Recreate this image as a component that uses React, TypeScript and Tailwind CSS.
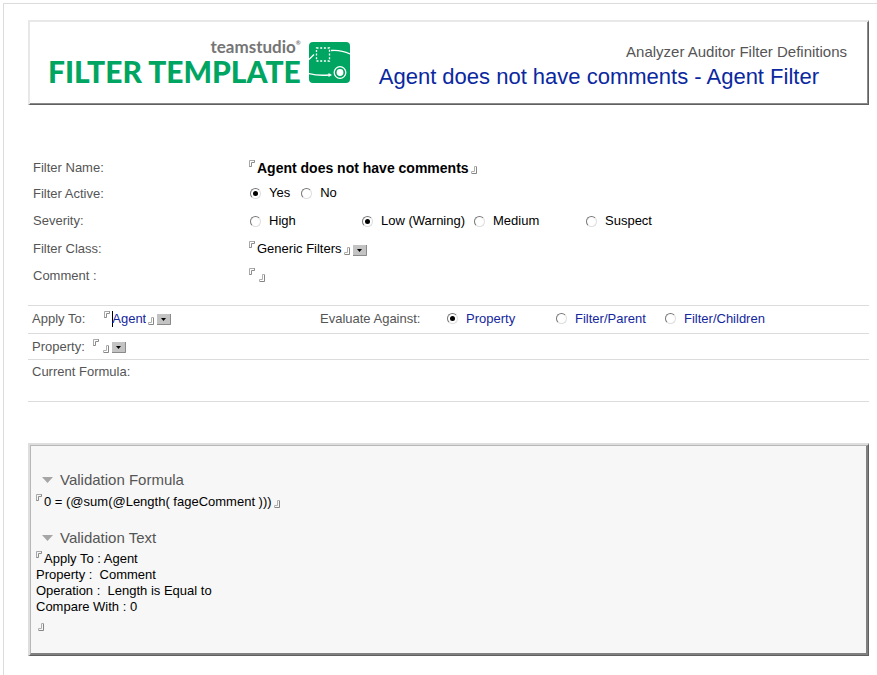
import React from "react";

const sans = "font-['Liberation_Sans',Arial,sans-serif]";

function OpenCorner({ className = "" }: { className?: string }) {
  return (
    <svg aria-hidden="true" className={`shrink-0 ${className}`} width="7" height="8" viewBox="0 0 7 8" fill="none">
      <path d="M.5 7V.5H6" stroke="#a8a8a8" />
      <path d="M.5 6.5H2.5V2.5H5.5V.5" stroke="#8c8c8c" />
    </svg>
  );
}

function CloseCorner({ className = "" }: { className?: string }) {
  return (
    <svg aria-hidden="true" className={`shrink-0 ${className}`} width="7" height="8" viewBox="0 0 7 8" fill="none">
      <path d="M5.5 .5V7.5H.5" stroke="#858585" />
      <path d="M.5 7V5.5H3.5V.5H5.5" stroke="#b0b0b0" />
    </svg>
  );
}

function DropArrow({ className = "" }: { className?: string }) {
  return (
    <svg aria-hidden="true" className={`shrink-0 ${className}`} width="14" height="11" viewBox="0 0 14 11">
      <path d="M0 0H14V11H0z" fill="#c3c3c3" />
      <path d="M13.5 0V10.5H0" stroke="#8a8a8a" fill="none" />
      <path d="M4 4H9L6.500 7z" fill="#000" />
    </svg>
  );
}

function Radio(props: { name: string; label: string; checked?: boolean; blue?: boolean }) {
  return (
    <label className={`flex items-center gap-2 whitespace-nowrap ${props.blue ? "text-[#14279e]" : "text-black"}`}>
      <input
        type="radio"
        name={props.name}
        defaultChecked={props.checked}
        className="grid size-[11px] shrink-0 appearance-none place-content-center rounded-full border border-t-[#777] border-r-[#dedede] border-b-[#dedede] border-l-[#777] before:size-[5px] before:rounded-full before:content-[''] checked:before:bg-black"
      />
      {props.label}
    </label>
  );
}

function PickField(props: { id: string; value: string; blue?: boolean; caret?: boolean }) {
  return (
    <div className="flex items-center">
      <OpenCorner className="-mt-2 mr-px" />
      {props.caret && <span className="-mr-px h-4 w-px bg-black" />}
      <select
        id={props.id}
        className={`field-sizing-content appearance-none bg-transparent p-0 outline-none ${props.blue ? "text-[#14279e]" : "text-black"}`}
      >
        <option>{props.value}</option>
      </select>
      <CloseCorner className="mt-1 ml-[2px]" />
      <DropArrow className="mt-[2px] ml-[2px]" />
    </div>
  );
}

function Row(props: { label: string; htmlFor?: string; tall?: boolean; children: React.ReactNode }) {
  return (
    <div className={`grid grid-cols-[216px_1fr] items-center ${props.tall ? "h-7" : "h-[26px]"}`}>
      {props.htmlFor ? <label htmlFor={props.htmlFor}>{props.label}</label> : <span>{props.label}</span>}
      {props.children}
    </div>
  );
}

function SectionTitle({ children }: { children: string }) {
  return (
    <h2>
      <button type="button" aria-expanded="true" className="flex items-center gap-[7px] text-[15px] leading-5">
        <svg aria-hidden="true" width="11" height="6" viewBox="0 0 11 6">
          <path d="M0 0H11L5.500 6z" fill="#a6a6a6" />
        </svg>
        {children}
      </button>
    </h2>
  );
}

function Logo() {
  return (
    <div className="flex items-end gap-2 font-[Lato,sans-serif]">
      <div className="flex flex-col items-end">
        <div className="flex text-[17px] leading-[17px] font-bold text-[#757575]">
          teamstudio<span className="text-[6px] leading-[10px]">®</span>
        </div>
        <div className="text-[30px] leading-8 font-black whitespace-nowrap text-[#00a562]">FILTER TEMPLATE</div>
      </div>
      <svg aria-hidden="true" className="mb-1" width="41" height="41" viewBox="0 0 41 41" fill="none">
        <rect width="41" height="41" rx="4" fill="#00a562" />
        <rect x="7.500" y="6" width="13" height="13" stroke="#fff" strokeWidth="1.300" strokeDasharray="2 1.700" />
        <path d="M0 17.500L5 12.500M22 8.500C29 8 36 9.500 41 12M0 31.500C7 33.500 14 33.500 20 33" stroke="#fff" strokeWidth="1.300" />
        <path d="M19.500 31L23 33L19.500 35z" fill="#fff" />
        <circle cx="31" cy="30.500" r="5.800" stroke="#fff" strokeWidth="1.300" />
        <circle cx="31" cy="30.500" r="3.400" fill="#fff" />
      </svg>
    </div>
  );
}

export default function App() {
  return (
    <div className={`flex min-h-screen flex-col bg-white pt-[3px] pl-[3px] text-[13px] leading-4 text-[#555] ${sans}`}>
      <main className="flex-1 border-t border-l border-[#dcdcdc] pt-4 pr-2 pl-6">
        <header className="border-t-2 border-r border-b border-l-2 border-t-[#e8e8e8] border-r-[#606060] border-b-[#606060] border-l-[#e8e8e8]">
          <div className="flex items-start justify-between border-r border-b border-[#8a8a8a] pr-5 pb-[11px] pl-[18px]">
            <div className="pt-4">
              <Logo />
            </div>
            <div className="flex flex-col items-end pt-5">
              <p className="text-[15px] leading-5">Analyzer Auditor Filter Definitions</p>
              <h1 className="pr-7 text-[22px] leading-[30px] text-[#0a28a0]">Agent does not have comments - Agent Filter</h1>
            </div>
          </div>
        </header>

        <form>
          <section className="mt-[50px] pl-[5px]">
            <Row label="Filter Name:" htmlFor="name">
              <div className="flex items-center">
                <OpenCorner className="-mt-2 mr-px" />
                <input
                  id="name"
                  defaultValue="Agent does not have comments"
                  className="field-sizing-content text-[14px] font-bold text-black outline-none"
                />
                <CloseCorner className="mt-1 ml-[2px]" />
              </div>
            </Row>
            <Row label="Filter Active:">
              <div className="flex gap-[11px] pb-[2px] pl-px">
                <Radio name="active" label="Yes" checked />
                <Radio name="active" label="No" />
              </div>
            </Row>
            <Row label="Severity:" tall>
              <div className="grid grid-cols-[repeat(4,112px)] pl-px">
                <Radio name="severity" label="High" />
                <Radio name="severity" label="Low (Warning)" checked />
                <Radio name="severity" label="Medium" />
                <Radio name="severity" label="Suspect" />
              </div>
            </Row>
            <Row label="Filter Class:" htmlFor="class" tall>
              <PickField id="class" value="Generic Filters" />
            </Row>
            <Row label="Comment :" htmlFor="comment">
              <div className="flex items-center">
                <OpenCorner className="-mt-2" />
                <input id="comment" className="w-[3px] outline-none" />
                <CloseCorner className="mt-1" />
              </div>
            </Row>
          </section>

          <section className="mt-4 border-t border-[#dcdcdc]">
            <div className="grid h-7 grid-cols-[288px_127px_1fr] items-center border-b border-[#dcdcdc] pb-[2px] pl-1">
              <div className="flex items-center gap-[19px]">
                <label htmlFor="apply">Apply To:</label>
                <PickField id="apply" value="Agent" blue caret />
              </div>
              <span>Evaluate Against:</span>
              <div className="grid grid-cols-[repeat(3,109px)]">
                <Radio name="against" label="Property" checked blue />
                <Radio name="against" label="Filter/Parent" blue />
                <Radio name="against" label="Filter/Children" blue />
              </div>
            </div>
            <div className="flex h-[26px] items-center gap-2 border-b border-[#dcdcdc] pl-1">
              <label htmlFor="property">Property:</label>
              <PickField id="property" value="" />
            </div>
            <div className="h-[42px] border-b border-[#dcdcdc] pt-1 pl-1">Current Formula:</div>
          </section>

          <section className="mt-[41px] border-t-2 border-r border-b border-l-2 border-t-[#dedede] border-r-[#606060] border-b-[#606060] border-l-[#dedede]">
            <div className="border-t border-r-2 border-b-2 border-l border-t-[#b8b8b8] border-r-[#808080] border-b-[#808080] border-l-[#b8b8b8] bg-[#f7f7f7] pt-6 pb-[22px] pl-[5px]">
              <div className="pl-[6px]">
                <SectionTitle>Validation Formula</SectionTitle>
              </div>
              <div className="mt-1 flex h-4 items-center">
                <OpenCorner className="-mt-2 mr-px" />
                <input
                  aria-label="Validation Formula"
                  defaultValue="0 = (@sum(@Length( fageComment )))"
                  className="field-sizing-content text-black outline-none"
                />
                <CloseCorner className="mt-1 ml-[2px]" />
              </div>
              <div className="mt-[18px] pl-[6px]">
                <SectionTitle>Validation Text</SectionTitle>
              </div>
              <div className="relative mt-[3px]">
                <OpenCorner className="absolute top-0 left-0" />
                <textarea
                  aria-label="Validation Text"
                  rows={4}
                  defaultValue={"Apply To : Agent\nProperty :  Comment\nOperation :  Length is Equal to\nCompare With : 0"}
                  className="block w-full resize-none overflow-hidden indent-2 text-black outline-none"
                />
              </div>
              <CloseCorner className="mt-2 ml-[2px]" />
            </div>
          </section>
        </form>
      </main>
    </div>
  );
}
